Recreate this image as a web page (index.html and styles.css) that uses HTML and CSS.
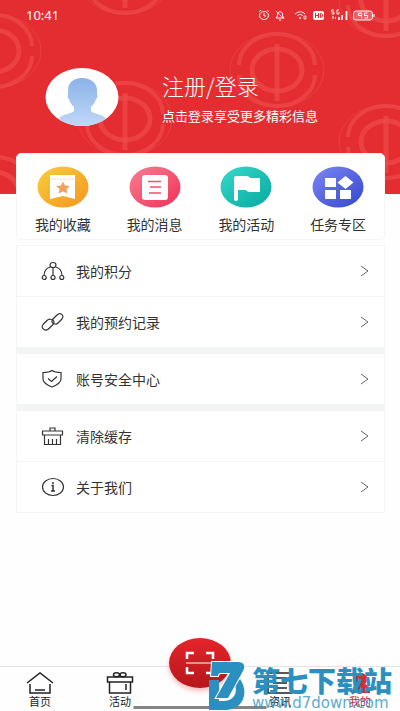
FILE: index.html
```html
<!DOCTYPE html>
<html lang="zh-CN">
<head>
<meta charset="utf-8">
<meta name="viewport" content="width=device-width, initial-scale=1">
<title>我的</title>
<link rel="stylesheet" href="styles.css">
</head>
<body>
<div class="page">
  <header class="hero">
    <svg class="hero-pattern" viewBox="0 0 400 194" preserveAspectRatio="xMidYMid slice" aria-hidden="true">
      <defs>
        <g id="emblem" fill="none" stroke="#ee4a4c">
          <ellipse rx="47" ry="37" stroke-width="1" opacity=".6"/>
          <path d="M-38-5A38 31 0 0 1 38-5M-38 5A38 31 0 0 0 38 5" stroke-width="4" opacity=".7"/>
          <ellipse rx="25" ry="21" stroke-width="5" opacity=".7"/>
          <path d="M0-26V31" stroke-width="5" opacity=".7"/>
        </g>
      </defs>
      <use href="#emblem" x="-6" y="51"/>
      <use href="#emblem" x="125" y="-23"/>
      <use href="#emblem" x="125" y="119"/>
      <use href="#emblem" x="277" y="70"/>
      <use href="#emblem" x="386" y="0"/>
      <use href="#emblem" x="386" y="142"/>
      <use href="#emblem" x="-6" y="193"/>
    </svg>

    <div class="status">
      <span class="clock">10:41</span>
      <svg class="status-icons" viewBox="0 0 118 14" fill="none" stroke="#fff" aria-hidden="true">
        <ellipse cx="6" cy="7.500" rx="4.500" ry="4"/><path d="M6 5v3h2M1 4l2-2M11 4L9 2"/>
        <path d="M18 10h8l-1.500-2V6c0-3-5-3-5 0v2zM21 12h2M18 3l8 8"/>
        <path d="M37 6c4-3 7-3 10 0M39 8c2-2 4-2 6 0"/><circle cx="42" cy="10" r="1" fill="#fff" stroke="none"/><path d="M46 8h2v3h-2z" stroke-width=".7"/>
        <rect x="55" y="3" width="11" height="9" rx="2" fill="#fff" stroke="none"/>
        <path d="M57.500 5v5M60.500 5v5M57.500 7.500h3M62.500 5.500v4h1l1-1V6.500l-1-1z" stroke="#e32d31"/>
        <path d="M76 2h-2.500v2H76v2h-2.500M81 2h-2v4h2V4" stroke-width=".9"/><path d="M75 8v3M77.500 9v2" stroke-width="1"/>
        <path d="M81 12V9M84 12V7M88.500 12V3" stroke-width="1.700"/>
        <rect x="95.500" y="3" width="19" height="9" rx="2.500" fill="#ea6265"/><path d="M116 6v3"/>
        <path d="M103.500 10V5h-3v2.500h3M109.500 5h-3v2.500h3V10h-3"/>
      </svg>
    </div>

    <a class="profile" href="#login">
      <svg class="avatar" viewBox="0 0 74 60" role="img" aria-label="头像">
        <defs>
          <linearGradient id="person" x2="0" y2="1"><stop stop-color="#8bb2e8"/><stop offset="1" stop-color="#c2d9f8"/></linearGradient>
          <clipPath id="face"><ellipse cx="37" cy="30" rx="36.500" ry="29"/></clipPath>
        </defs>
        <ellipse cx="37" cy="30" rx="36.500" ry="29" fill="#fff"/>
        <path clip-path="url(#face)" fill="url(#person)" d="M37 11c9 0 15 5 15 12v5c1 1 0 4-1 4-1 4-3 6-5 8v4c1 3 13 3 15 8v8H14v-8c2-5 13-5 15-8v-4c-2-2-4-4-5-8-1 0-2-3-1-4v-5c0-7 5-12 14-12z"/>
      </svg>
      <span class="profile-text">
        <span class="profile-title">注册/登录</span>
        <span class="profile-note">点击登录享受更多精彩信息</span>
      </span>
    </a>
  </header>

  <main class="content">
    <nav class="shortcuts" aria-label="快捷入口">
      <a href="#fav"><svg viewBox="0 0 52 42" aria-hidden="true">
        <defs><linearGradient id="gold" x2="1" y2="1"><stop stop-color="#f9cf3a"/><stop offset="1" stop-color="#f5941f"/></linearGradient></defs>
        <ellipse cx="26" cy="21" rx="25.500" ry="20.500" fill="url(#gold)"/>
        <path d="M13 9h25v24l-12-3-13 3z" fill="#fff"/><path d="M14 13h23" stroke="#f3d9a5" stroke-dasharray="2 1"/>
        <path d="M26 15.500l2 4 5 .5-3.500 3 1 4.500-4.500-2-4.500 2 1-4.500-3.500-3 5-.5z" fill="#f0a35e"/></svg><span>我的收藏</span></a>
      <a href="#msg"><svg viewBox="0 0 52 42" aria-hidden="true">
        <defs><linearGradient id="pink" x2="1" y2="1"><stop stop-color="#fb7e93"/><stop offset="1" stop-color="#ee3157"/></linearGradient></defs>
        <ellipse cx="26" cy="21" rx="25.500" ry="20.500" fill="url(#pink)"/>
        <rect x="13" y="9" width="26" height="25" rx="3" fill="#fff"/><path d="M19 15.500h13M21 21h11M20 27h12" stroke="#ef4f70" stroke-width="1.700"/></svg><span>我的消息</span></a>
      <a href="#act"><svg viewBox="0 0 52 42" aria-hidden="true">
        <defs><linearGradient id="teal" x2="1" y2="1"><stop stop-color="#38d9cc"/><stop offset="1" stop-color="#07a99e"/></linearGradient></defs>
        <ellipse cx="26" cy="21" rx="25.500" ry="20.500" fill="url(#teal)"/>
        <path d="M14 34V12c0-2 2-2 4-2h9c2 0 2 2 4 2h9v14H29c-2 0-2-2-4-2h-7v10c0 1-4 1-4 0z" fill="#fff"/></svg><span>我的活动</span></a>
      <a href="#task"><svg viewBox="0 0 52 42" aria-hidden="true">
        <defs><linearGradient id="blue" x2="1" y2="1"><stop stop-color="#7d86f2"/><stop offset="1" stop-color="#3446cf"/></linearGradient></defs>
        <ellipse cx="26" cy="21" rx="25.500" ry="20.500" fill="url(#blue)"/>
        <path d="M13 12h11v9H13zM13 24h11v9H13zM28 24h11v9H28zM33.500 10l8 6.500-8 6.500-8-6.500z" fill="#fff"/></svg><span>任务专区</span></a>
    </nav>

    <div class="menu">
      <section class="menu-group">
        <a href="#points"><svg class="menu-icon" viewBox="0 0 24 20" aria-hidden="true"><ellipse cx="12" cy="4" rx="3" ry="2.500"/><path d="M12 6.500V15M9.500 6C5 7 3 10 3 15M14.500 6c4.500 1 6.500 4 6.500 9"/><circle cx="3.200" cy="16.500" r="2"/><circle cx="12" cy="16.500" r="2"/><circle cx="20.800" cy="16.500" r="2"/></svg><span>我的积分</span><svg class="arrow" viewBox="0 0 8 12" aria-hidden="true"><path d="M0 1l7 5-7 5"/></svg></a>
        <a href="#booking"><svg class="menu-icon" viewBox="0 0 24 20" aria-hidden="true"><path d="M14 12c-3 0-4-3-2-5l4-4c3-3 8 0 5 4l-4 4c-1 1-2 1.300-3 1"/><path d="M10 7.500c3 0 4 3 2 5l-4 4c-3 3.500-9 0-6-4l4-4c1-1 3-1.500 4-1"/></svg><span>我的预约记录</span><svg class="arrow" viewBox="0 0 8 12" aria-hidden="true"><path d="M0 1l7 5-7 5"/></svg></a>
      </section>
      <section class="menu-group">
        <a href="#security"><svg class="menu-icon" viewBox="0 0 24 20" aria-hidden="true"><path d="M11 1.500c3 2 6 2 9 2V10c0 4-4 6-9 8-5-2-9-4-9-8V3.500c3 0 6 0 9-2z"/><path d="M7 9.500l3.500 3 5.500-5"/></svg><span>账号安全中心</span><svg class="arrow" viewBox="0 0 8 12" aria-hidden="true"><path d="M0 1l7 5-7 5"/></svg></a>
      </section>
      <section class="menu-group">
        <a href="#cache"><svg class="menu-icon" viewBox="0 0 24 20" aria-hidden="true"><path d="M9 5V2h5v3M1.500 9V5h20v4zM3.500 9v9.500h16V9M7.500 18v-5M11.500 18v-5M15.500 18v-5"/></svg><span>清除缓存</span><svg class="arrow" viewBox="0 0 8 12" aria-hidden="true"><path d="M0 1l7 5-7 5"/></svg></a>
        <a href="#about"><svg class="menu-icon" viewBox="0 0 24 20" aria-hidden="true"><ellipse cx="12" cy="10" rx="10.500" ry="8.500"/><path d="M10.500 8.500H12V14M10 14h4M12 5v2" stroke-width="1.500"/></svg><span>关于我们</span><svg class="arrow" viewBox="0 0 8 12" aria-hidden="true"><path d="M0 1l7 5-7 5"/></svg></a>
      </section>
    </div>
  </main>

  <nav class="tabbar" aria-label="主导航">
    <a href="#home"><svg viewBox="0 0 28 22" aria-hidden="true"><path d="M1 11L14 1l13 10M4 12v9h20v-9M9 18h10"/></svg><span>首页</span></a>
    <a href="#activity"><svg viewBox="0 0 28 22" aria-hidden="true"><path d="M1.500 5h25v5h-25zM3.500 10v11h21V10M20 12v6"/><ellipse cx="10.500" cy="2.800" rx="3" ry="2"/><ellipse cx="17" cy="2.800" rx="3" ry="2"/></svg><span>活动</span></a>
    <button class="scan" type="button" aria-label="扫一扫">
      <svg viewBox="0 0 30 24" aria-hidden="true"><path d="M2 8V2h7M21 2h7v6M28 16v6h-7M9 22H2v-6" stroke-width="2.500"/><path d="M1 12h28" stroke-width="1"/></svg>
    </button>
    <a href="#news"><svg viewBox="0 0 28 22" aria-hidden="true"><path d="M2 1h24v20H2zM7 6h14M7 11h14M7 16h14"/></svg><span>资讯</span></a>
    <a class="current" href="#me" aria-current="page"><svg viewBox="0 0 28 22" aria-hidden="true"><path d="M14 1c8 0 9 7 5 11 3 1 5 4 5 9H6c0-5 2-8 5-9-5-4-4-11 3-11z"/></svg><span>我的</span></a>
    <span class="home-bar"></span>
  </nav>

  <div class="watermark">
    <svg viewBox="0 0 38 50" aria-hidden="true">
      <path d="M1 19h10v21h4c10 0 15-7 12-16l5-6c10 14 2 31-14 31H1z" fill="#2b8fc0"/>
      <path d="M4 1h26c6 0 8 4 5 9L20 37H8l14-25H13c-2 0-3 1-3 3H3z" fill="#2b8fc0" stroke="#fff" stroke-width="2" paint-order="stroke"/>
    </svg>
    <div class="watermark-text"><strong>第七下载站</strong><span>www.d7down.com</span></div>
  </div>
</div>
</body>
</html>
```
FILE: styles.css
```css
* {
  box-sizing: border-box;
}

body {
  margin: 0;
  background: #fefefe;
  color: #333;
  font-family: "Noto Sans CJK SC", sans-serif;
  font-size: 14px;
  line-height: 20px;
}

a {
  color: inherit;
  text-decoration: none;
}

.page {
  position: relative;
  display: flex;
  flex-direction: column;
  min-height: 100vh;
}

.hero {
  position: relative;
  height: 194px;
  overflow: hidden;
  background: #e32d31;
  color: #fff;
}

.hero-pattern {
  position: absolute;
  inset: 0;
  width: 100%;
  height: 100%;
}

.status {
  position: relative;
  display: flex;
  align-items: center;
  justify-content: space-between;
  height: 30px;
  padding: 0 24px 0 26px;
}

.clock {
  font-family: "Noto Sans", sans-serif;
  font-size: 13px;
}

.status-icons {
  width: 118px;
  height: 14px;
}

.profile {
  position: relative;
  display: flex;
  gap: 43px;
  padding: 37px 16px 0 45px;
}

.avatar {
  width: 74px;
  height: 60px;
}

.profile-text {
  display: flex;
  flex-direction: column;
  gap: 6px;
  padding-top: 4px;
}

.profile-title {
  font-size: 22px;
  font-weight: 300;
  line-height: 28px;
}

.profile-note {
  font-size: 13px;
  line-height: 22px;
}

.content {
  position: relative;
  margin: -41px 15px 0 16px;
}

.shortcuts {
  display: grid;
  grid-template-columns: repeat(4, 1fr);
  padding: 12px 0 5px;
  border: 1px solid #f8f5f5;
  border-radius: 5px;
  background: #fff;
}

.shortcuts a {
  display: flex;
  flex-direction: column;
  align-items: center;
  gap: 6px;
}

.shortcuts svg {
  width: 52px;
  height: 42px;
}

.menu {
  display: flex;
  flex-direction: column;
  gap: 7px;
  margin-top: 5px;
  border: 1px solid #f5f5f5;
  background: #f3f4f4;
}

.menu-group a {
  display: flex;
  align-items: center;
  gap: 11px;
  height: 50px;
  padding: 0 15px 0 24px;
  background: #fff;
}

.menu-group a + a {
  height: 51px;
  border-top: 1px solid #f5f5f5;
}

.menu-icon {
  width: 24px;
  height: 20px;
  fill: none;
  stroke: #333;
  stroke-width: 1.2;
}

.arrow {
  width: 8px;
  height: 12px;
  margin-left: auto;
  fill: none;
  stroke: #666;
}

.tabbar {
  position: relative;
  display: grid;
  grid-template-columns: repeat(5, 1fr);
  height: 45px;
  margin-top: auto;
  border-top: 1px solid #e4e4e4;
  color: #222;
  font-size: 11px;
  line-height: 14px;
}

.tabbar a {
  display: flex;
  flex-direction: column;
  align-items: center;
  padding-top: 5px;
}

.tabbar a svg {
  width: 28px;
  height: 22px;
  fill: none;
  stroke: #222;
  stroke-width: 1.5;
}

.tabbar .current {
  color: #c3272d;
}

.tabbar .current svg {
  fill: #d92c35;
  stroke: none;
}

.scan {
  display: grid;
  place-items: center;
  justify-self: center;
  width: 62px;
  height: 50px;
  margin-top: -29px;
  padding: 0;
  border: 0;
  border-radius: 50%;
  background: linear-gradient(#e4252a, #b5161c);
  box-shadow: 0 3px 5px #e6303855;
}

.scan svg {
  width: 30px;
  height: 24px;
  fill: none;
  stroke: #fff;
}

.home-bar {
  position: absolute;
  bottom: 2px;
  left: 50%;
  width: 133px;
  height: 3px;
  background: #858585;
  transform: translateX(-50%);
}

.watermark {
  position: absolute;
  right: 8px;
  bottom: 0;
  display: flex;
  align-items: flex-end;
  gap: 6px;
  color: #2b8fc0;
  pointer-events: none;
}

.watermark svg {
  width: 38px;
  height: 50px;
}

.watermark-text {
  display: flex;
  flex-direction: column;
}

.watermark strong {
  font-size: 28px;
  font-weight: 900;
  line-height: 30px;
}

.watermark span {
  font-family: "DejaVu Sans", sans-serif;
  font-size: 15px;
  line-height: 16px;
  opacity: 0.75;
}
```
